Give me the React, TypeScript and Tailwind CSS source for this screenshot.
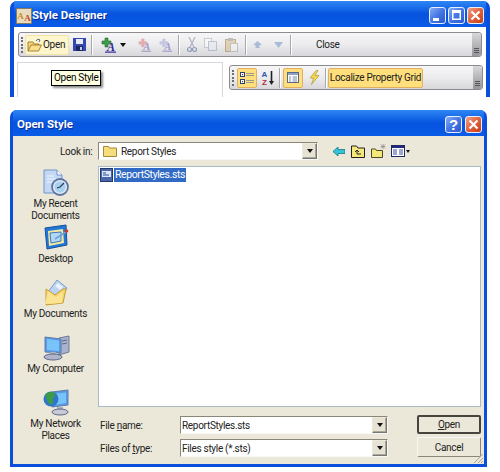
const font = "font-['Roboto','Liberation_Sans',Arial,sans-serif]";
const label = "text-[10px] tracking-[-0.3px] text-[#222]";

function Sep() {
  return <div className="mx-[5px] h-[20px] w-[2px] shrink-0 border-r border-white bg-[#a8a8ac]" />;
}

function Grip() {
  return (
    <div className="mr-[1px] flex h-[16px] w-[3px] shrink-0 flex-col justify-between">
      {[0, 1, 2, 3, 4].map((i) => (
        <span key={i} className="h-[2px] w-[2px] bg-[#6d6d72]" />
      ))}
    </div>
  );
}

function EndGrip() {
  return (
    <div className="ml-auto flex h-full w-[9px] shrink-0 flex-col items-center justify-end rounded-r-[3px] bg-gradient-to-b from-[#d8d8da] to-[#96969a] pb-[3px]">
      <span className="mb-[1px] h-[1px] w-[5px] bg-[#555]" />
      <span className="mb-[1px] h-[1px] w-[5px] bg-[#555]" />
      <span className="h-[1px] w-[5px] bg-[#555]" />
    </div>
  );
}

function CaptionBtn({ kind }: { kind: "min" | "max" | "close" | "help" }) {
  const bg =
    kind === "close"
      ? "from-[#f0a088] via-[#e0603a] to-[#c83c16]"
      : "from-[#88acf2] via-[#4476e4] to-[#2c58d0]";
  return (
    <div className={`flex h-[17px] w-[17px] shrink-0 items-center justify-center rounded-[3px] border border-[#e8eefc] bg-gradient-to-br ${bg}`}>
      <svg width="15" height="15" viewBox="0 0 15 15">
        {kind === "min" && <rect x="3" y="10" width="6" height="3" fill="#fff" />}
        {kind === "max" && <path d="M3 2h9v10H3zM4.5 5v5.5h6V5z" fill="#fff" fillRule="evenodd" />}
        {kind === "close" && <path d="M3.5 3.5l8 8M11.5 3.5l-8 8" stroke="#fff" strokeWidth="2.2" />}
        {kind === "help" && (
          <text x="7.5" y="13" textAnchor="middle" fontSize="15" fontWeight="700" fill="#fff" fontFamily="Liberation Sans">?</text>
        )}
      </svg>
    </div>
  );
}

function TitleBar({ title, icon, children }: { title: string; icon?: React.ReactNode; children: React.ReactNode }) {
  return (
    <div className="flex h-[26px] items-center bg-gradient-to-b from-[#2f86f4] via-[#0653df] to-[#0a5ce6] px-[2px] pt-[3px]">
      {icon}
      <span className="text-[11.5px] font-bold text-white [text-shadow:1px_1px_0_#0a2f96]">{title}</span>
      {children}
    </div>
  );
}

function AppIcon() {
  return (
    <svg width="16" height="16" viewBox="0 0 16 16" className="shrink-0">
      <rect x="0.5" y="0.5" width="15" height="15" fill="#e8dcc0" stroke="#8a7a60" />
      <text x="4.5" y="11" textAnchor="middle" fontSize="9" fontWeight="700" fill="#c98a18" fontFamily="Liberation Serif">A</text>
      <text x="11.5" y="13" textAnchor="middle" fontSize="9" fontWeight="700" fill="#c0481c" fontFamily="Liberation Serif">A</text>
    </svg>
  );
}

function FolderOpen() {
  return (
    <svg width="15" height="14" viewBox="0 0 15 14" className="shrink-0">
      <path d="M1 13V4h5l1 2h5v2" fill="#f5d67a" stroke="#8f6c20" strokeWidth="0.8" />
      <path d="M1 13l3-6h10.5l-3 6z" fill="#fbdf8c" stroke="#8f6c20" strokeWidth="0.8" />
      <path d="M9 3c1-2 3-2 4-1l-1 2" fill="none" stroke="#4a6a9a" />
    </svg>
  );
}

function Floppy() {
  return (
    <svg width="13" height="13" viewBox="0 0 13 13" className="shrink-0">
      <rect width="13" height="13" fill="#3448ae" />
      <rect x="3" y="1" width="7" height="5" fill="#e8eaf6" />
      <rect x="3" y="8" width="7" height="5" fill="#1c2660" />
      <rect x="7" y="9" width="2" height="3" fill="#c8cce8" />
    </svg>
  );
}

function StyleIcon({ faded, tint = "#d05050", w = 16 }: { faded?: boolean; tint?: string; w?: number }) {
  return (
    <svg width={w} height="16" viewBox="0 0 16 16" className={`shrink-0 ${faded ? "opacity-40" : ""}`}>
      <path d="M1 4h3V1h3v3h3v3H7v3H4V7H1z" fill={faded ? tint : "#3f9a4a"} stroke={faded ? tint : "#24682c"} strokeWidth="0.6" />
      <text x="10" y="14" textAnchor="middle" fontSize="12" fontWeight="700" fontStyle="italic" fill="#33289a" fontFamily="Liberation Serif">A</text>
      <rect x="4" y="14.5" width="11" height="1.2" fill="#33289a" />
    </svg>
  );
}

function Scissors() {
  return (
    <svg width="10" height="16" viewBox="0 0 10 16" className="shrink-0 opacity-60">
      <path d="M2 0l5 10M8 0L3 10" stroke="#8a8fa0" strokeWidth="1.2" />
      <circle cx="2.5" cy="12.5" r="2" fill="none" stroke="#5a6aa0" strokeWidth="1.2" />
      <circle cx="7.5" cy="12.5" r="2" fill="none" stroke="#5a6aa0" strokeWidth="1.2" />
    </svg>
  );
}

function CopyIcon() {
  return (
    <svg width="13" height="13" viewBox="0 0 13 13" className="shrink-0 opacity-50">
      <rect x="0.5" y="0.5" width="7" height="9" fill="#fff" stroke="#a0a8b8" />
      <rect x="4.5" y="3.5" width="8" height="9" fill="#e4e8f2" stroke="#8f98ac" />
    </svg>
  );
}

function PasteIcon() {
  return (
    <svg width="13" height="14" viewBox="0 0 13 14" className="shrink-0 opacity-50">
      <rect x="0.5" y="1.5" width="10" height="12" fill="#d8b878" stroke="#8d7440" />
      <rect x="3" y="0" width="5" height="3" fill="#8d8d8d" />
      <rect x="5.5" y="5.5" width="7" height="8" fill="#f4f4f4" stroke="#9a9a9a" />
    </svg>
  );
}

function Diamond({ up }: { up?: boolean }) {
  return (
    <svg width="9" height="7" viewBox="0 0 9 7" className="shrink-0">
      <path d={up ? "M4.5 0L9 4H6.5v3h-4V4H0z" : "M0 1h9L4.5 7z"} fill="#a9bbd6" />
    </svg>
  );
}

function CategorizedIcon() {
  return (
    <svg width="14" height="16" viewBox="0 0 14 16">
      <rect x="0.5" y="2.5" width="4" height="4" fill="#fff" stroke="#2c3f70" />
      <rect x="0.5" y="9.5" width="4" height="4" fill="#fff" stroke="#2c3f70" />
      <rect x="2" y="4" width="1.2" height="1.2" fill="#2c3f70" />
      <rect x="2" y="11" width="1.2" height="1.2" fill="#2c3f70" />
      <path d="M6 3.5h8M6 5.5h8M6 10.5h8M6 12.5h8" stroke="#9a9a8c" />
    </svg>
  );
}

function AzIcon() {
  return (
    <svg width="14" height="16" viewBox="0 0 14 16" className="shrink-0">
      <text x="4.5" y="7" textAnchor="middle" fontSize="8" fontWeight="700" fill="#2f55a8" fontFamily="Liberation Sans">A</text>
      <text x="4.5" y="15" textAnchor="middle" fontSize="8" fontWeight="700" fill="#b03040" fontFamily="Liberation Sans">Z</text>
      <path d="M11.5 1v11" stroke="#222" strokeWidth="1.6" />
      <path d="M9 11h5l-2.5 4z" fill="#222" />
    </svg>
  );
}

function PagesIcon() {
  return (
    <svg width="12" height="11" viewBox="0 0 12 11">
      <rect x="0.5" y="0.5" width="11" height="10" fill="#fff" stroke="#5a6a88" />
      <rect x="1" y="1" width="10" height="2" fill="#8ea2c8" />
      <path d="M2 5h2M5.500 5H10M2 7h2M5.500 7H10M2 9h2M5.500 9H10" stroke="#7a88a8" />
    </svg>
  );
}

function Lightning() {
  return (
    <svg width="11" height="15" viewBox="0 0 11 15" className="shrink-0">
      <path d="M7 0.5L1 8h3.5L2.5 14.5 10 5.5H6L9 .5z" fill="#f4d84e" stroke="#b09a38" strokeWidth="0.7" />
    </svg>
  );
}

function Toolbar({ className, children }: { className: string; children: React.ReactNode }) {
  return (
    <div className={`flex h-[25px] items-center rounded-[3px] border border-[#8b8b90] bg-gradient-to-b from-[#f6f6f7] via-[#ececee] to-[#d8d8dc] pl-[2px] ${className}`}>
      {children}
    </div>
  );
}

function Arrow() {
  return <span className="h-0 w-0 border-x-[3px] border-t-[4px] border-x-transparent border-t-[#111]" />;
}

function HotBtn({ className, children }: { className: string; children: React.ReactNode }) {
  return (
    <div className={`flex h-[20px] shrink-0 items-center rounded-[2px] border border-[#e0b060] bg-[#ffdf7c] ${className}`}>
      {children}
    </div>
  );
}

function StyleDesigner() {
  return (
    <div className="relative ml-[10px] mt-[1px] h-[96px] w-[480px] overflow-hidden rounded-t-[7px] bg-[#0a4fdc] px-[4px]">
      <TitleBar title="Style Designer" icon={<AppIcon />}>
        <div className="ml-auto flex gap-[2px]">
          <CaptionBtn kind="min" />
          <CaptionBtn kind="max" />
          <CaptionBtn kind="close" />
        </div>
      </TitleBar>
      <div className="h-[70px] bg-white px-[4px] pt-[5px]">
        <Toolbar className="w-[464px]">
          <Grip />
          <div className={`flex h-[20px] w-[44px] shrink-0 items-center gap-[1px] rounded-[2px] border border-[#f2e4a8] bg-[#fdf5cc] pl-[1px] ${label}`}>
            <FolderOpen />
            Open
          </div>
          <div className="ml-[4px]">
            <Floppy />
          </div>
          <Sep />
          <div className="ml-[3px] flex items-center gap-[3px]">
            <StyleIcon />
            <Arrow />
          </div>
          <div className="ml-[12px]">
            <StyleIcon faded w={14} />
          </div>
          <div className="ml-[7px]">
            <StyleIcon faded tint="#8a8fd0" w={14} />
          </div>
          <Sep />
          <div className="ml-[2px]">
            <Scissors />
          </div>
          <div className="ml-[7px]">
            <CopyIcon />
          </div>
          <div className="ml-[8px] mr-[2px]">
            <PasteIcon />
          </div>
          <Sep />
          <div className="ml-[1px]">
            <Diamond up />
          </div>
          <div className="ml-[12px] mr-[2px]">
            <Diamond />
          </div>
          <Sep />
          <span className={`ml-[19px] ${label}`}>Close</span>
          <EndGrip />
        </Toolbar>
        <div className="mt-[5px] flex items-start">
          <div className="-ml-[1px] h-[40px] w-[206px] shrink-0 border border-[#d4d8dc] bg-white" />
          <Toolbar className="ml-[6px] mt-[3px] w-[254px] shrink-0">
            <Grip />
            <HotBtn className="ml-[1px] w-[20px] justify-center">
              <CategorizedIcon />
            </HotBtn>
            <div className="ml-[3px]">
              <AzIcon />
            </div>
            <Sep />
            <HotBtn className="-ml-[3px] w-[20px] justify-center">
              <PagesIcon />
            </HotBtn>
            <div className="ml-[6px]">
              <Lightning />
            </div>
            <Sep />
            <HotBtn className={`-ml-[4px] w-[95px] justify-center whitespace-nowrap ${label}`}>Localize Property Grid</HotBtn>
            <EndGrip />
          </Toolbar>
        </div>
      </div>
      <div className="absolute left-[41px] top-[69px] whitespace-nowrap border border-black bg-[#ffffe1] px-[2px] text-[10px] leading-[14px] tracking-[-0.3px] text-black shadow-[2px_2px_2px_rgba(0,0,0,0.45)]">
        Open Style
      </div>
    </div>
  );
}

function Recent() {
  return (
    <svg width="26" height="27" viewBox="0 0 26 27">
      <path d="M1 1h13l5 5v18H1z" fill="#c4d8f4" stroke="#6f94cc" />
      <path d="M14 1v5h5" fill="#fff" stroke="#6f94cc" />
      <path d="M4 7h7M4 10h9M4 13h5" stroke="#f0f6ff" />
      <circle cx="17" cy="18" r="8" fill="#dfe6f0" stroke="#5c76a0" strokeWidth="1.8" />
      <circle cx="17" cy="18" r="5.5" fill="#a8d0f0" />
      <path d="M21 14l-4 4-3 1" stroke="#2a3a50" fill="none" strokeWidth="1.2" />
    </svg>
  );
}

function DesktopIcon() {
  return (
    <svg width="26" height="27" viewBox="0 0 26 27">
      <path d="M2 4l21-3 1 20-20 4z" fill="#1f78d8" stroke="#1a5098" />
      <path d="M5 7l15-2 1 14-15 3z" fill="#f2e6a0" />
      <path d="M7 9l11-1v9L8 19z" fill="#b4d8f4" stroke="#3f78b8" />
      <path d="M12 15l11-7" stroke="#6aa0d8" strokeWidth="1.5" />
      <circle cx="23.5" cy="7" r="1.8" fill="#d03a20" />
    </svg>
  );
}

function DocsIcon() {
  return (
    <svg width="25" height="27" viewBox="0 0 25 27">
      <path d="M5 13L14 1l10 8-7 10z" fill="#bcd4f2" stroke="#7f9cc8" />
      <path d="M12 7l3-3 5 4-3 3z" fill="#fff" opacity="0.7" />
      <path d="M3 10l9 6 8-6 3 0-3 14-17 2z" fill="#f8d468" stroke="#c89a30" />
      <path d="M2 25l3-13 8 6 7-6-1 12z" fill="#fbe394" />
    </svg>
  );
}

function ComputerIcon() {
  return (
    <svg width="28" height="26" viewBox="0 0 28 26">
      <path d="M17 3l10-2v16l-10 3z" fill="#a8b2cc" stroke="#6f7a94" />
      <path d="M20 6l5-1M20 9l5-1" stroke="#5f6a84" />
      <path d="M3 2l16 2v14L3 17z" fill="#5a9ae4" stroke="#5f7aa8" />
      <path d="M5 4l12 1.5v10.500L5 15z" fill="#78c4fa" />
      <rect x="8" y="17" width="6" height="3" fill="#aab2c0" />
      <ellipse cx="11" cy="22" rx="9" ry="3" fill="#b0b5cc" stroke="#5e6684" />
    </svg>
  );
}

function NetworkIcon() {
  return (
    <svg width="26" height="27" viewBox="0 0 26 27">
      <path d="M9 3l16-2v15l-16 2z" fill="#5a9ae4" stroke="#5f7aa8" />
      <path d="M11 5l12-1.5v10.500l-12 2z" fill="#78c4fa" />
      <rect x="14" y="18" width="6" height="3" fill="#aab2c0" />
      <ellipse cx="17" cy="23" rx="8" ry="3" fill="#c6cad8" stroke="#5e6684" />
      <circle cx="8" cy="10" r="7.5" fill="#2f78c8" />
      <path d="M3 5c3-3 8-3 9 0s-3 3-2 7-4 4-5 1-3-6-2-8z" fill="#3c9a48" />
    </svg>
  );
}

function Place({ icon, text }: { icon: React.ReactNode; text: React.ReactNode }) {
  return (
    <div className={`flex h-[55px] flex-col items-center text-center leading-[12px] ${label}`}>
      <div className="flex h-[27px] items-center justify-center">{icon}</div>
      <div className="mt-[2px] whitespace-nowrap">{text}</div>
    </div>
  );
}

function ComboArrow() {
  return (
    <div className="flex w-[15px] shrink-0 items-center justify-center border border-[#ece9d8] border-b-[#777] border-r-[#777] bg-[#e6e3d4] shadow-[inset_-1px_-1px_0_#aca899]">
      <Arrow />
    </div>
  );
}

function Combo({ className, children }: { className: string; children: React.ReactNode }) {
  return (
    <div className={`flex border border-[#f8f8f4] border-l-[#8a877a] border-t-[#8a877a] bg-white ${className}`}>
      <div className={`flex min-w-0 flex-1 items-center ${label}`}>{children}</div>
      <ComboArrow />
    </div>
  );
}

function NavIcons() {
  return (
    <div className="ml-[15px] flex items-center">
      <svg width="12" height="9" viewBox="0 0 12 9">
        <path d="M0 4.5L5 0v2.5h7v4H5V9z" fill="#2fc4d8" stroke="#0c6a78" strokeWidth="0.7" />
      </svg>
      <svg width="14" height="13" viewBox="0 0 14 13" className="ml-[6px]">
        <path d="M.5 12.500V1h5l1.5 2h6.500v9.500z" fill="#f4e87a" stroke="#222" />
        <path d="M4 7l2-2 2 2M6 5v4h4" fill="none" stroke="#222" />
      </svg>
      <svg width="15" height="14" viewBox="0 0 15 14" className="ml-[6px]">
        <path d="M.5 13.500V5h4l1 1.500h6v7z" fill="#f4e87a" stroke="#4a4a20" />
        <path d="M12 0v5M9.500 2.500h5M10 .5l4 4M14 .5l-4 4" stroke="#8a8a8a" strokeWidth="0.7" />
      </svg>
      <div className="ml-[5px] flex items-center gap-[1px]">
        <svg width="14" height="12" viewBox="0 0 14 12">
          <rect x="0.5" y="0.5" width="13" height="11" fill="#fff" stroke="#1f2a60" />
          <rect x="1" y="1" width="12" height="2" fill="#1f2a80" />
          <path d="M2 5h4M8 5h4M2 7h4M8 7h4M2 9h4M8 9h4" stroke="#3a4aa0" />
        </svg>
        <span className="h-0 w-0 border-x-[2px] border-t-[3px] border-x-transparent border-t-[#111]" />
      </div>
    </div>
  );
}

function FileGlyph() {
  return (
    <svg width="13" height="14" viewBox="0 0 13 14" className="shrink-0">
      <rect x="0.5" y="0.5" width="12" height="13" fill="#4a66a8" stroke="#24396c" />
      <rect x="2" y="3" width="9" height="6" fill="#dbe6f8" />
      <path d="M3 5h3M3 7h6" stroke="#2a4a90" />
    </svg>
  );
}

function OpenDialog() {
  return (
    <div className="relative ml-[10px] mt-[13px] w-[477px] overflow-hidden rounded-t-[7px] bg-[#0a4fdc] px-[3px] pb-[3px]">
      <TitleBar title="Open Style" icon={<div className="w-[2px]" />}>
        <div className="ml-auto flex gap-[3px]">
          <CaptionBtn kind="help" />
          <CaptionBtn kind="close" />
        </div>
      </TitleBar>
      <div className="flex h-[328px] bg-[#ebe8d9]">
        <div className="h-full w-[85px] shrink-0 pt-[33px]">
          <Place icon={<Recent />} text={<>My Recent<br />Documents</>} />
          <Place icon={<DesktopIcon />} text="Desktop" />
          <Place icon={<DocsIcon />} text="My Documents" />
          <Place icon={<ComputerIcon />} text="My Computer" />
          <Place icon={<NetworkIcon />} text={<>My Network<br />Places</>} />
        </div>
        <div className="min-w-0 flex-1 pt-[6px]">
          <div className="-ml-[38px] flex h-[18px] items-center">
            <span className={`w-[38px] shrink-0 whitespace-nowrap ${label}`}>Look in:</span>
            <Combo className="h-[18px] w-[220px] shrink-0">
              <div className="ml-[4px] flex items-center gap-[4px]">
                <svg width="14" height="12" viewBox="0 0 14 12" className="shrink-0">
                  <path d="M.5 11.500V1.500h5l1 1.500h7v8.500z" fill="#f5dc7c" stroke="#a88a30" />
                </svg>
                Report Styles
              </div>
            </Combo>
            <NavIcons />
          </div>
          <div className="mt-[6px] h-[241px] w-[383px] border border-[#a8bcc8] bg-white pl-[1px] pt-[1px]">
            <div className="flex items-center gap-[1px]">
              <FileGlyph />
              <span className="bg-[#316ac5] px-[1px] text-[10.5px] leading-[14px] tracking-[-0.4px] text-white">ReportStyles.sts</span>
            </div>
          </div>
          <div className="mt-[9px] flex">
            <div className="w-[319px] shrink-0 pl-[2px]">
              <div className="flex h-[18px] items-center">
                <span className={`w-[80px] ${label}`}>
                  File <span className="underline">n</span>ame:
                </span>
                <Combo className="h-[18px] w-[208px] pl-[1px]">ReportStyles.sts</Combo>
              </div>
              <div className="mt-[5px] flex h-[18px] items-center">
                <span className={`w-[80px] ${label}`}>
                  Files of <span className="underline">t</span>ype:
                </span>
                <Combo className="h-[18px] w-[208px] pl-[1px]">Files style (*.sts)</Combo>
              </div>
            </div>
            <div className="-mt-[1px] flex w-[64px] flex-col gap-[3px]">
              <div className={`flex h-[19px] items-center justify-center rounded-[2px] border-2 border-[#45453e] bg-[#ebe8d9] ${label}`}>
                <span><span className="underline">O</span>pen</span>
              </div>
              <div className={`flex h-[20px] items-center justify-center rounded-[2px] border border-[#f8f8f2] border-b-[#8a877a] border-r-[#8a877a] bg-[#ebe8d9] ${label}`}>
                Cancel
              </div>
            </div>
          </div>
        </div>
      </div>
      <svg width="11" height="11" viewBox="0 0 11 11" className="absolute bottom-[3px] right-[3px]">
        <path d="M10 1L1 10M10 5l-5 5M10 8l-2 2" stroke="#aca899" />
      </svg>
    </div>
  );
}

export default function App() {
  return (
    <div className={`h-[472px] w-[500px] overflow-hidden bg-white ${font}`}>
      <StyleDesigner />
      <OpenDialog />
    </div>
  );
}
